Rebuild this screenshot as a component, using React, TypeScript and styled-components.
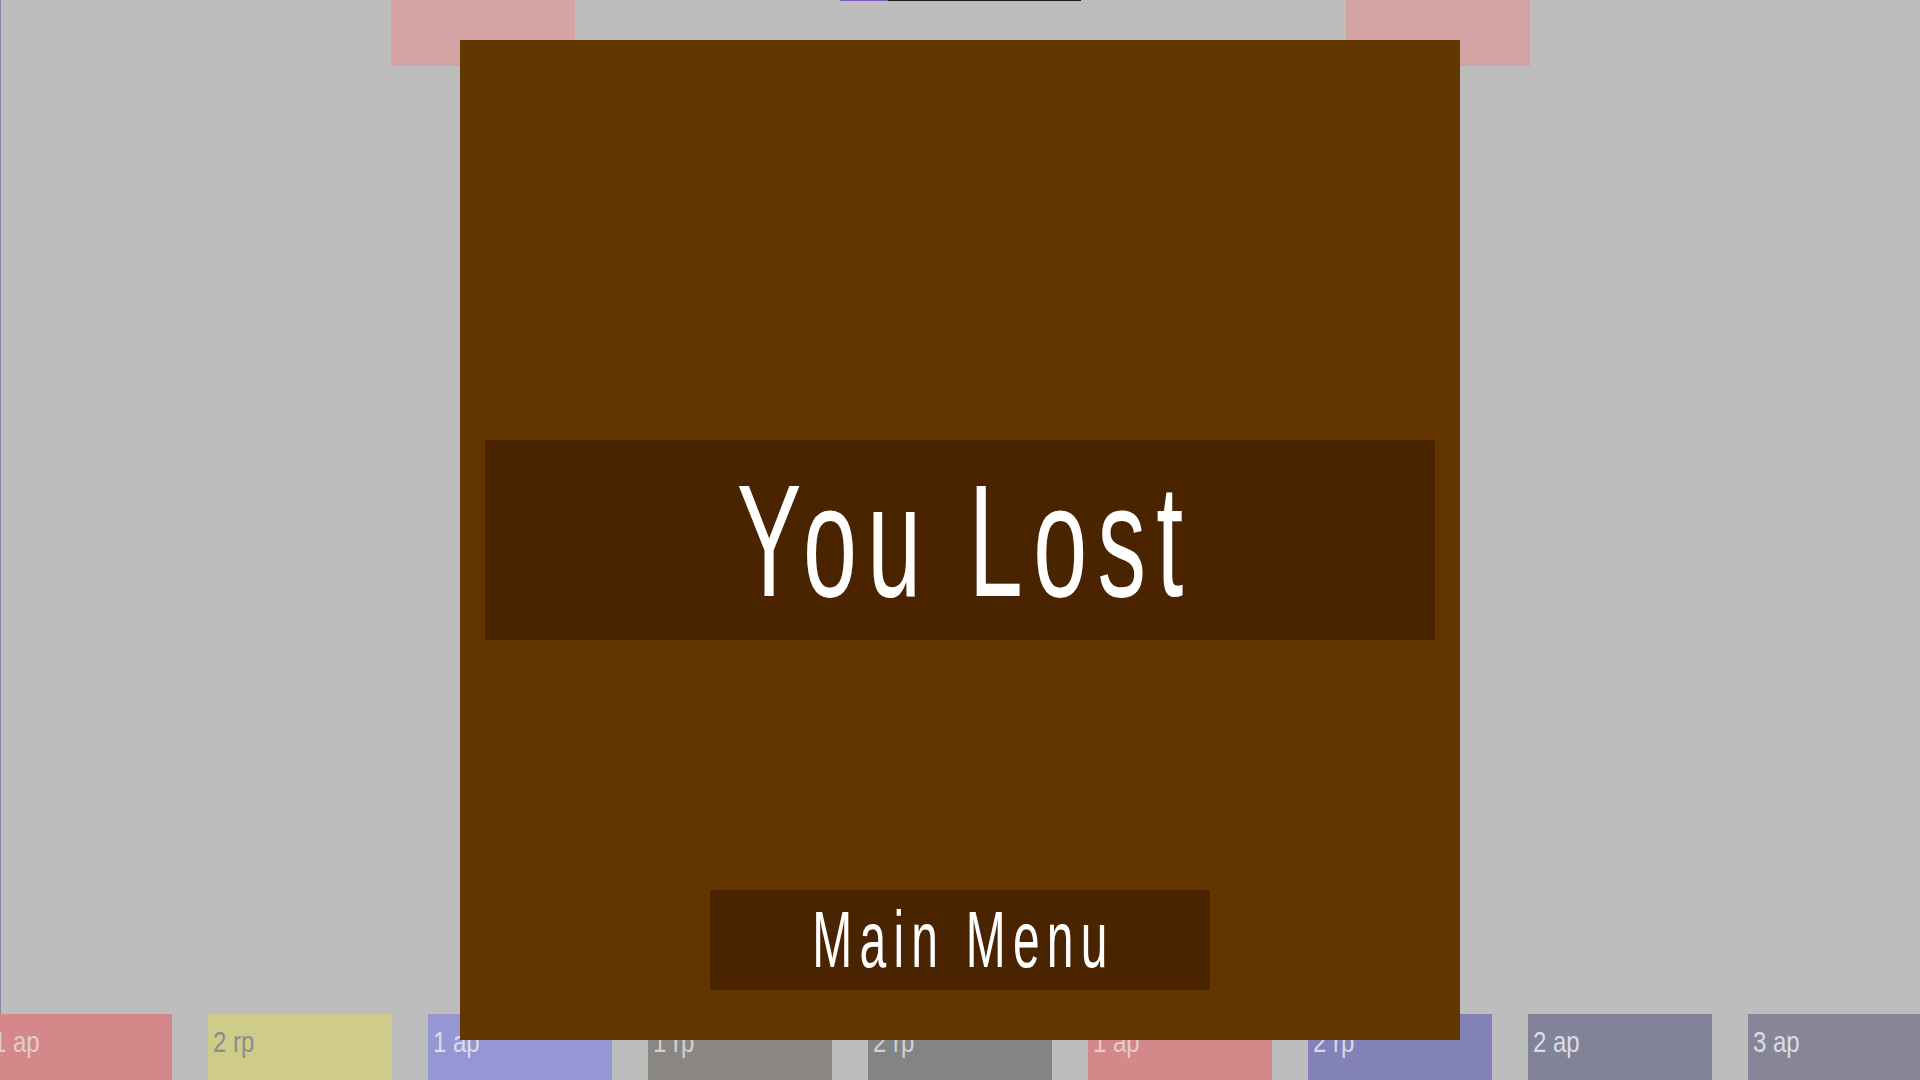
import React from "react";
import styled, { createGlobalStyle } from "styled-components";

const GlobalStyle = createGlobalStyle`
  html, body {
    margin: 0;
    padding: 0;
    background: #bdbdbd;
    overflow: hidden;
    font-family: "Liberation Sans", Arial, sans-serif;
  }
`;

const Stage = styled.div`
  width: 1920px;
  height: 1080px;
  position: relative;
  overflow: hidden;
  display: flex;
  flex-direction: column;
  background: #bdbdbd;
`;

const Board = styled.div`
  flex: 0 0 1014px;
  box-shadow: inset 1px 0 0 #8a8aa8;
  display: flex;
  flex-direction: column;
`;

const EnemyRow = styled.div`
  display: flex;
  justify-content: center;
  align-items: flex-start;
  gap: 265px;
`;

const EnemySlot = styled.div`
  width: 184px;
  height: 66px;
  background: #d4a4a4;
`;

const TurnBar = styled.div`
  width: 241px;
  height: 1px;
  background: #1e1e1e;
  display: flex;
`;

const TurnFill = styled.div`
  height: 100%;
  background: #7e57c2;
`;

const Hand = styled.div`
  flex: 1;
  display: flex;
  justify-content: center;
  gap: 36px;
`;

const Card = styled.div<{ $bg: string; $fg: string }>`
  flex: 0 0 184px;
  height: 100%;
  box-sizing: border-box;
  padding: 13px 5px 0;
  background: ${(p) => p.$bg};
  color: ${(p) => p.$fg};
`;

const CardLabel = styled.span`
  display: inline-block;
  font-size: 30px;
  line-height: 30px;
  white-space: nowrap;
  transform: scaleX(0.8);
  transform-origin: left center;
`;

const Overlay = styled.div`
  position: absolute;
  inset: 0;
  display: flex;
  align-items: center;
  justify-content: center;
`;

const Modal = styled.div`
  width: 1000px;
  height: 1000px;
  box-sizing: border-box;
  padding: 400px 25px 50px;
  background: #633600;
  display: flex;
  flex-direction: column;
  align-items: center;
`;

const Banner = styled.div`
  align-self: stretch;
  height: 200px;
  background: #4a2300;
  display: flex;
  align-items: center;
  justify-content: center;
`;

const BannerText = styled.span`
  display: inline-block;
  color: #ffffff;
  font-size: 159px;
  line-height: 159px;
  letter-spacing: 17px;
  padding-left: 17px;
  padding-top: 3px;
  white-space: nowrap;
  transform: scaleX(0.61);
`;

const MenuButton = styled.button`
  margin-top: auto;
  width: 500px;
  height: 100px;
  padding: 0;
  border: none;
  background: #4a2300;
  display: flex;
  align-items: center;
  justify-content: center;
  cursor: pointer;
  font-family: "Liberation Sans", Arial, sans-serif;
`;

const MenuText = styled.span`
  display: inline-block;
  color: #ffffff;
  font-size: 80px;
  line-height: 80px;
  letter-spacing: 12px;
  padding-left: 12px;
  white-space: nowrap;
  transform: scaleX(0.6);
`;

const hand = [
  { label: "1 ap", bg: "#d4888a", fg: "#e2cccc" },
  { label: "2 rp", bg: "#cfcb88", fg: "#8c8c8c" },
  { label: "1 ap", bg: "#9596d4", fg: "#dcdcea" },
  { label: "1 rp", bg: "#8a8682", fg: "#d2d2d2" },
  { label: "2 rp", bg: "#838486", fg: "#d2d2d2" },
  { label: "1 ap", bg: "#d4888a", fg: "#e2cccc" },
  { label: "2 rp", bg: "#8282b8", fg: "#d8d8e6" },
  { label: "2 ap", bg: "#828298", fg: "#dcdce4" },
  { label: "3 ap", bg: "#868698", fg: "#dcdce4" },
];

export default function App() {
  const turnProgress = 0.2;
  return (
    <>
      <GlobalStyle />
      <Stage>
        <Board>
          <EnemyRow>
            <EnemySlot />
            <TurnBar>
              <TurnFill style={{ width: `${turnProgress * 100}%` }} />
            </TurnBar>
            <EnemySlot />
          </EnemyRow>
        </Board>
        <Hand>
          {hand.map((c, i) => (
            <Card key={i} $bg={c.bg} $fg={c.fg}>
              <CardLabel>{c.label}</CardLabel>
            </Card>
          ))}
        </Hand>
        <Overlay>
          <Modal>
            <Banner>
              <BannerText>You Lost</BannerText>
            </Banner>
            <MenuButton>
              <MenuText>Main Menu</MenuText>
            </MenuButton>
          </Modal>
        </Overlay>
      </Stage>
    </>
  );
}
